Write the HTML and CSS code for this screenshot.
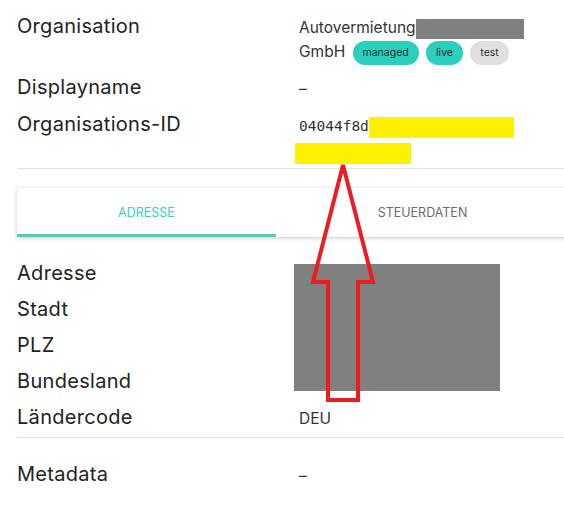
FILE: index.html
```html
<!DOCTYPE html>
<html>
<head>
    <link rel="stylesheet" href="styles.css">
</head>
<body>
<div class="page">
    <section class="fields info">
        <div class="label">Organisation</div>
        <div class="value org">
            Autovermietung<span class="redact org-name"></span><br>
            GmbH
            <span class="badge">managed</span>
            <span class="badge">live</span>
            <span class="badge muted">test</span>
        </div>

        <div class="label">Displayname</div>
        <div class="value">–</div>

        <div class="label">Organisations-ID</div>
        <div class="value mono">
            04044f8d<span class="mark mark-first"></span>
            <div class="mark mark-second"></div>
        </div>
    </section>

    <div class="tabs">
        <div class="tab active">Adresse</div>
        <div class="tab">Steuerdaten</div>
    </div>

    <section class="fields address">
        <div class="label">Adresse</div>
        <div class="redact address-block"></div>
        <div class="label">Stadt</div>
        <div class="label">PLZ</div>
        <div class="label">Bundesland</div>
        <div class="label">Ländercode</div>
        <div class="value">DEU</div>
    </section>

    <section class="fields meta">
        <div class="label">Metadata</div>
        <div class="value">–</div>
    </section>

    <!-- hand drawn arrow on top of the screenshot -->
    <svg class="arrow" viewBox="0 0 68 246" width="68" height="246">
        <polygon points="33,5 63,122 48,122 48,240 18,240 18,122 3,122" fill="none" stroke="#ed1c24" stroke-width="4"></polygon>
    </svg>
</div>
</body>
</html>
```

FILE: styles.css
```css
html { overflow: hidden; }
body {
    margin: 0;
    font-family: Inter, Lato, sans-serif;
    color: #222;
    background: #fff;
}
.page {
    position: relative;
    margin-left: 17px;
    width: 552px;
    padding-top: 7px;
}
.fields {
    display: grid;
    grid-template-columns: 282px 1fr;
    align-items: baseline;
}
.label {
    grid-column: 1;
    font-size: 20px;
    letter-spacing: 0.3px;
    line-height: 24px;
    padding: 6.5px 0;
    color: #222;
}
.value {
    grid-column: 2;
    font-size: 15.5px;
    line-height: 24px;
    padding: 6.5px 0 0;
    color: #333;
}
.value.org { padding-bottom: 5px; }
.info { border-bottom: 1px solid #e2e2e2; }
.redact {
    background: #808080;
    display: inline-block;
}
.org-name {
    width: 108px;
    height: 20px;
    vertical-align: top;
    margin-top: 3px;
}
.badge {
    display: inline-block;
    height: 24px;
    line-height: 24px;
    padding: 0 10px;
    margin-left: 3px;
    border-radius: 12px;
    background: #2ccfbd;
    color: #1f2f2d;
    font-size: 10.5px;
    vertical-align: top;
    transform: translateY(1px);
}
.badge.muted { background: #e0e0e0; }
.mono {
    font-family: "DejaVu Sans Mono", monospace;
    font-size: 14.5px;
    padding-bottom: 4px;
}
.mark {
    background: #fff200;
    height: 21px;
}
.mark-first {
    display: inline-block;
    width: 145px;
    vertical-align: top;
    margin-top: 3px;
}
.mark-second {
    width: 116px;
    margin: 5px 0 0 -4px;
}
.tabs {
    display: flex;
    margin-top: 19px;
    height: 49px;
    background: #fff;
    box-shadow: 0 1px 4px rgba(0, 0, 0, 0.22);
}
.tab {
    text-transform: uppercase;
    font-size: 12.5px;
    color: #6b6b6b;
    text-align: center;
    line-height: 50px;
    flex: 1;
}
.tab.active {
    flex: 0 0 259px;
    color: #3ccfbe;
    box-shadow: inset 0 -3px 0 #5ec4b5;
}
.address {
    padding-top: 18px;
    padding-bottom: 2px;
    border-bottom: 1px solid #e2e2e2;
}
.address .label { padding: 6px 0; }
.address-block {
    grid-column: 2;
    grid-row: 1 / 5;
    align-self: start;
    width: 206px;
    height: 127px;
    margin: 9px 0 0 -5px;
}
.address .value { grid-row: 5; padding: 6px 0 0; }
.meta { padding-top: 17px; }
.arrow {
    position: absolute;
    left: 293px;
    top: 160px;
}
```
